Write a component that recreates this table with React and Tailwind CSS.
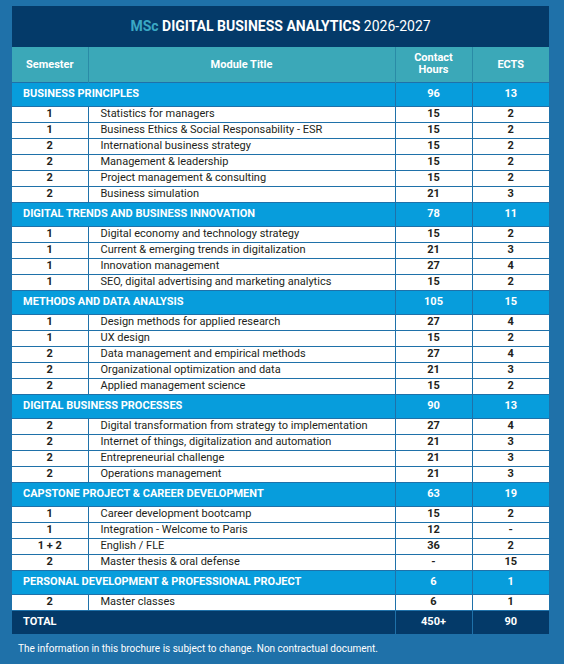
import React from 'react'

const sections = [
  {
    title: 'BUSINESS PRINCIPLES', hours: '96', ects: '13',
    rows: [
      ['1', 'Statistics for managers', '15', '2'],
      ['1', 'Business Ethics & Social Responsability - ESR', '15', '2'],
      ['2', 'International business strategy', '15', '2'],
      ['2', 'Management & leadership', '15', '2'],
      ['2', 'Project management & consulting', '15', '2'],
      ['2', 'Business simulation', '21', '3'],
    ],
  },
  {
    title: 'DIGITAL TRENDS AND BUSINESS INNOVATION', hours: '78', ects: '11',
    rows: [
      ['1', 'Digital economy and technology strategy', '15', '2'],
      ['1', 'Current & emerging trends in digitalization', '21', '3'],
      ['1', 'Innovation management', '27', '4'],
      ['1', 'SEO, digital advertising and marketing analytics', '15', '2'],
    ],
  },
  {
    title: 'METHODS AND DATA ANALYSIS', hours: '105', ects: '15',
    rows: [
      ['1', 'Design methods for applied research', '27', '4'],
      ['1', 'UX design', '15', '2'],
      ['2', 'Data management and empirical methods', '27', '4'],
      ['2', 'Organizational optimization and data', '21', '3'],
      ['2', 'Applied management science', '15', '2'],
    ],
  },
  {
    title: 'DIGITAL BUSINESS PROCESSES', hours: '90', ects: '13',
    rows: [
      ['2', 'Digital transformation from strategy to implementation', '27', '4'],
      ['2', 'Internet of things, digitalization and automation', '21', '3'],
      ['2', 'Entrepreneurial challenge', '21', '3'],
      ['2', 'Operations management', '21', '3'],
    ],
  },
  {
    title: 'CAPSTONE PROJECT & CAREER DEVELOPMENT', hours: '63', ects: '19',
    rows: [
      ['1', 'Career development bootcamp', '15', '2'],
      ['1', 'Integration - Welcome to Paris', '12', '-'],
      ['1 + 2', 'English / FLE', '36', '2'],
      ['2', 'Master thesis & oral defense', '-', '15'],
    ],
  },
  {
    title: 'PERSONAL DEVELOPMENT & PROFESSIONAL PROJECT', hours: '6', ects: '1',
    rows: [['2', 'Master classes', '6', '1']],
  },
]

export default function App() {
  return (
    <div
      className="w-[564px] h-[664px] bg-[#1f71a9] pt-[6px] pl-[12px] text-[11px]"
      style={{ fontFamily: 'Roboto, "Liberation Sans", sans-serif' }}
    >
      <table className="w-[537px] border-collapse table-fixed">
        <colgroup>
          <col className="w-[76px]" />
          <col className="w-[307px]" />
          <col className="w-[77px]" />
          <col className="w-[77px]" />
        </colgroup>
        <thead>
          <tr className="h-[41px] bg-[#043a69]">
            <th colSpan={4} className="text-center text-[14px] font-normal text-white">
              <span className="font-bold text-[#3aa8c4]">MSc</span>{' '}
              <span className="font-bold">DIGITAL BUSINESS ANALYTICS</span> 2026-2027
            </th>
          </tr>
          <tr className="h-[35px] bg-[#3ba8b8] text-white font-bold leading-[11px]">
            <th className="border-r border-[#2a8ba6]">Semester</th>
            <th className="border-r border-[#2a8ba6]">Module Title</th>
            <th className="border-r border-[#2a8ba6] leading-[12px]">Contact<br />Hours</th>
            <th>ECTS</th>
          </tr>
        </thead>
        <tbody>
          {sections.map((s) => (
            <React.Fragment key={s.title}>
              <tr className="h-[24px] bg-[#079ddc] text-white font-bold">
                <td colSpan={2} className="pl-[11px] border-y border-[#1f71a9]">{s.title}</td>
                <td className="text-center border border-[#1f71a9]">{s.hours}</td>
                <td className="text-center border-y border-[#1f71a9]">{s.ects}</td>
              </tr>
              {s.rows.map((r) => (
                <tr key={r[1]} className="h-[16px] bg-white text-[#231f20] leading-[14px]">
                  <td className="text-center font-bold border-r border-b border-[#1f71a9]">{r[0]}</td>
                  <td className="pl-[12px] border-r border-b border-[#1f71a9]">{r[1]}</td>
                  <td className="text-center font-bold border-r border-b border-[#1f71a9]">{r[2]}</td>
                  <td className="text-center font-bold border-b border-[#1f71a9]">{r[3]}</td>
                </tr>
              ))}
            </React.Fragment>
          ))}
          <tr className="h-[24px] bg-[#043a69] text-white font-bold">
            <td colSpan={2} className="pl-[11px]">TOTAL</td>
            <td className="text-center border-x border-[#1f71a9]">450+</td>
            <td className="text-center">90</td>
          </tr>
        </tbody>
      </table>
      <p className="mt-[7px] pl-[6px] text-[10px] text-white">
        The information in this brochure is subject to change. Non contractual document.
      </p>
    </div>
  )
}
